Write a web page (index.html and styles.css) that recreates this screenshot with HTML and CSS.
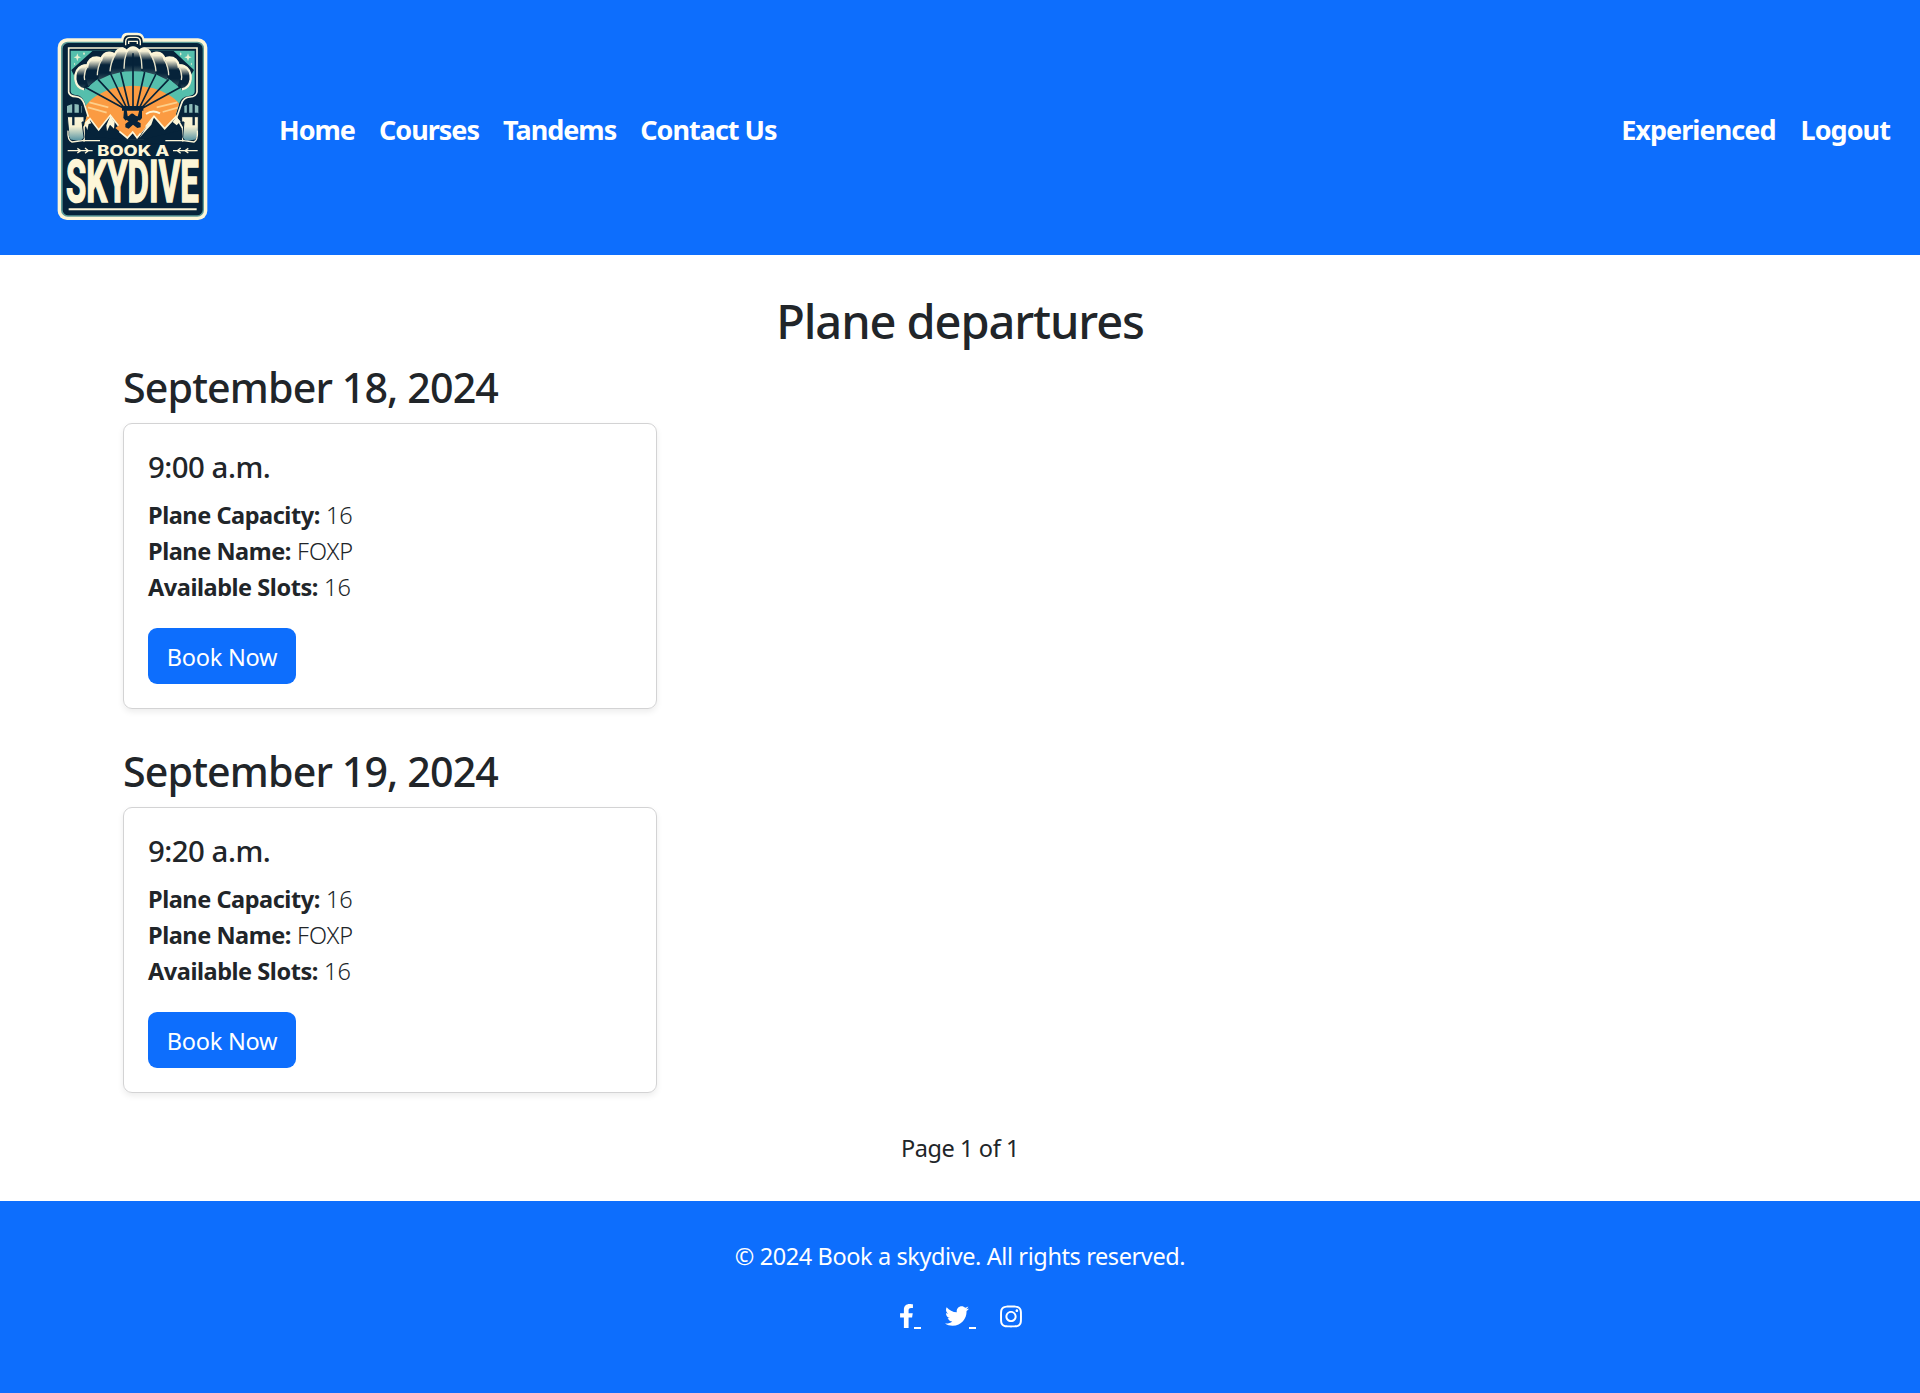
FILE: index.html
```html
<!DOCTYPE html>
<html lang="en">
<head>
<meta charset="utf-8">
<title>Book a skydive</title>
<link rel="stylesheet" href="styles.css">
</head>
<body>
<header class="navbar">
  <a class="brand" href="#" aria-label="Book a skydive">
    <svg class="logo" viewBox="0 0 570 645">
      <defs>
        <linearGradient id="canopy" x1="0" y1="0" x2="0" y2="1">
          <stop offset="0" stop-color="#fdf6d8"/><stop offset=".12" stop-color="#f2edd2"/><stop offset=".45" stop-color="#06233a"/><stop offset=".75" stop-color="#06233a"/><stop offset="1" stop-color="#33505c"/>
        </linearGradient>
        <linearGradient id="post" x1="0" y1="0" x2="0" y2="1">
          <stop offset="0" stop-color="#fdf6d8"/><stop offset=".4" stop-color="#f4f0d2"/><stop offset="1" stop-color="#4e8fa0"/>
        </linearGradient>
        <clipPath id="scene"><path d="M92 92H464V216Q462 226 446 228Q424 230 418 250L408 282L440 358H120L142 282Q136 230 112 226Q92 224 92 214Z"/></clipPath>
      </defs>
      <path d="M244 62V54Q246 38 264 38H292Q312 38 314 62" fill="#fdf6d8"/>
      <rect x="53" y="55" width="449" height="545" rx="28" fill="#fdf6d8"/>
      <rect x="63" y="65" width="429" height="525" rx="20" fill="#5d9b98"/>
      <rect x="68" y="69" width="420" height="517" rx="17" fill="#06233a"/>
      <path d="M250 76V62Q252 46 266 46H290Q306 46 308 62V76" fill="#06233a"/>
      <path d="M257 76V64Q258 52 270 52H288Q300 52 301 64V76M266 72V64H292V72" fill="none" stroke="#fdf6d8" stroke-width="4"/>
      <path d="M92 92H464V216Q462 226 446 228Q424 230 418 250L408 282L440 358H120L142 282Q136 230 112 226Q92 224 92 214Z" fill="#55bfac"/>
      <g clip-path="url(#scene)">
        <path d="M158 92H400L462 150L430 204L120 202L94 150Z" fill="#06233a"/>
        <path d="M142 206Q180 154 280 153Q380 154 420 206L400 260H160Z" fill="#55bfac"/>
        <ellipse cx="280" cy="302" rx="158" ry="105" fill="#fb9b42"/>
        <path d="M148 247L205 262M144 262L200 278M412 247L350 262M416 262L368 276" stroke="#fdcf8b" stroke-width="5"/>
        <path d="M318 282Q338 268 360 280" fill="none" stroke="#fdf6d8" stroke-width="6"/>
      </g>
      <path d="M86 92V84H250M310 84H471V216Q469 230 450 231Q430 232 424 252L411 290M86 84V216Q88 229 108 230Q126 232 132 250L145 290" fill="none" stroke="#fdf6d8" stroke-width="5"/>
      <path d="M112 100L115 109L123 112L115 115L112 124L109 115L101 112L109 109ZM444 100L447 109L455 112L447 115L444 124L441 115L433 112L441 109ZM132 96l3 5-3 5-3-5ZM422 97l3 5-3 5-3-5ZM104 128l2 4-2 4-2-4ZM454 128l2 4-2 4-2-4Z" fill="#e6f0d2"/>
      <path d="M132 322L150 296L176 330L211 286L262 352L280 334L292 352L342 289L374 326L408 290L428 325V362H132Z" fill="#06233a" stroke="#fdf6d8" stroke-width="5"/>
      <path d="M211 288L199 316L201 334L210 314L222 326L224 306ZM342 291L326 310L298 354L334 314ZM146 296L134 308L142 330L146 312L154 310ZM408 292L398 306L410 316L422 304Z" fill="#fdf6d8"/>
      <path d="M135 328L168 352L262 358L310 358L426 330V370H135Z" fill="#06233a"/>
      <path d="M226 324L262 354L280 336L292 354L318 320L296 306H250Z" fill="#fb9b42"/>
      <path d="M238 334L262 354L278 336L291 353L302 340" fill="none" stroke="#fdf6d8" stroke-width="5"/>
      <g fill="url(#canopy)">
        <path d="M104 180Q102 145 130 134Q150 128 158 145Q140 165 134 210Q110 206 104 180Z"/>
        <path d="M454 180Q456 145 430 134Q408 128 400 145Q420 165 424 210Q448 206 454 180Z"/>
        <path d="M140 140Q144 108 174 112Q192 114 194 128Q172 150 164 184L145 198Q132 164 140 140Z"/>
        <path d="M418 140Q414 108 384 112Q366 114 364 128Q386 150 396 184L413 198Q426 164 418 140Z"/>
        <path d="M180 128Q182 96 212 97Q230 99 232 112Q212 140 210 164L176 180Q174 148 180 128Z"/>
        <path d="M378 128Q376 96 346 97Q328 99 326 112Q346 140 350 164L382 180Q384 148 378 128Z"/>
        <path d="M222 116Q226 82 252 85Q266 88 264 108Q254 130 252 154L214 164Q212 138 222 116Z"/>
        <path d="M336 116Q332 82 306 85Q292 88 294 108Q304 130 308 154L346 164Q348 138 336 116Z"/>
        <path d="M256 108Q258 82 279 80Q300 82 302 108Q306 132 304 154H252Q252 130 256 108Z"/>
      </g>
      <path d="M132 208Q110 204 106 178Q104 148 126 138Q136 134 142 138Q146 112 170 112Q178 112 184 118Q190 96 210 98Q218 99 224 104Q232 84 250 86Q256 88 260 94Q268 82 279 82Q290 82 298 94Q302 88 308 86Q326 84 334 104Q340 99 348 98Q368 96 374 118Q380 112 388 112Q412 112 416 138Q422 134 432 138Q454 148 452 178Q448 204 426 208" fill="none" stroke="#fdf6d8" stroke-width="7"/>
      <path d="M142 140Q130 160 134 180M184 120Q172 144 172 166M224 106Q212 128 210 154M260 96Q252 118 252 146M298 96Q306 118 306 146M334 106Q346 128 348 154M374 120Q386 144 386 166M416 140Q428 160 424 180" fill="none" stroke="#e8e4cb" stroke-width="4"/>
      <path d="M133 200L250 264M174 178L254 264M212 162L260 264M242 156L268 264M279 100V264M314 156L290 264M348 162L298 264M386 178L304 264M424 200L308 264" fill="none" stroke="#06233a" stroke-width="5"/>
      <path d="M246 258H310V272H246ZM252 270H260L264 294L257 302L250 294ZM298 270H306V294L299 302L292 294ZM256 286Q264 292 270 284Q278 276 284 285Q292 292 300 286L302 296L292 304L302 310V322L292 324L279 314L266 326L256 322V312L266 304L256 298Z" fill="#06233a"/>
      <path d="M81 258Q104 246 125 258V280H81ZM433 258Q454 246 475 258V280H433Z" fill="#8dbcb9"/>
      <path d="M82 290H132V306H126L132 352Q130 362 116 364L91 360Q83 350 86 336ZM425 290H475V336Q476 350 466 360L442 364Q430 362 428 352L432 306H425Z" fill="url(#post)" stroke="#06233a" stroke-width="3"/>
      <path d="M84 332Q82 362 96 366L128 362H180M472 332Q474 362 462 366L430 362H376" fill="none" stroke="#fdf6d8" stroke-width="4"/>
      <path d="M100 236V316M120 244V286M82 282H130M444 244V286M461 236V316M430 282H474" stroke="#06233a" stroke-width="7"/>
      <path d="M83 392H158M399 392H473M112 385L122 392L112 399M135 384L145 392L135 400M445 385L435 392L445 399M422 384L412 392L422 400" fill="none" stroke="#fdf6d8" stroke-width="4"/>
      <text class="logo-small" x="172" y="407" textLength="216" lengthAdjust="spacingAndGlyphs">BOOK A</text>
      <text class="logo-big" x="78" y="546" textLength="398" lengthAdjust="spacingAndGlyphs">SKYDIVE</text>
      <path d="M86 568H470" stroke="#fdf6d8" stroke-width="6"/>
    </svg>
  </a>
  <nav class="menu">
    <a href="#">Home</a><a href="#">Courses</a><a href="#">Tandems</a><a href="#">Contact Us</a>
  </nav>
  <nav class="menu menu-end">
    <a href="#">Experienced</a><a href="#">Logout</a>
  </nav>
</header>

<main class="container">
  <h1>Plane departures</h1>
  <section class="day">
    <h2>September 18, 2024</h2>
    <article class="card">
      <h5>9:00 a.m.</h5>
      <p><strong>Plane Capacity:</strong> 16<br><strong>Plane Name:</strong> FOXP<br><strong>Available Slots:</strong> 16</p>
      <a class="btn" href="#">Book Now</a>
    </article>
  </section>
  <section class="day">
    <h2>September 19, 2024</h2>
    <article class="card">
      <h5>9:20 a.m.</h5>
      <p><strong>Plane Capacity:</strong> 16<br><strong>Plane Name:</strong> FOXP<br><strong>Available Slots:</strong> 16</p>
      <a class="btn" href="#">Book Now</a>
    </article>
  </section>
  <div class="pagination">Page 1 of 1</div>
</main>

<footer class="footer">
  <p>© 2024 Book a skydive. All rights reserved.</p>
  <div class="social">
    <a class="facebook" href="#" aria-label="Facebook"><svg viewBox="0 0 320 512"><path d="M279.14 288l14.22-92.66h-88.91v-60.13c0-25.35 12.42-50.06 52.24-50.06h40.42V6.26S260.43 0 225.36 0c-73.22 0-121.08 44.38-121.08 124.72v70.62H22.89V288h81.39v224h100.17V288z"/></svg><i></i></a>
    <a class="twitter" href="#" aria-label="Twitter"><svg viewBox="0 0 512 512"><path d="M459.37 151.716c.325 4.548.325 9.097.325 13.645 0 138.72-105.583 298.558-298.558 298.558-59.452 0-114.68-17.219-161.137-47.106 8.447.974 16.568 1.299 25.34 1.299 49.055 0 94.213-16.568 130.274-44.832-46.132-.975-84.792-31.188-98.112-72.772 6.498.974 12.995 1.624 19.818 1.624 9.421 0 18.843-1.3 27.614-3.573-48.081-9.747-84.143-51.98-84.143-102.985v-1.299c13.969 7.797 30.214 12.67 47.431 13.319-28.264-18.843-46.781-51.005-46.781-87.391 0-19.492 5.197-37.36 14.294-52.954 51.655 63.675 129.3 105.258 216.365 109.807-1.624-7.797-2.599-15.918-2.599-24.04 0-57.828 46.782-104.934 104.934-104.934 30.213 0 57.502 12.67 76.67 33.137 23.715-4.548 46.456-13.32 66.599-25.34-7.798 24.366-24.366 44.833-46.132 57.827 21.117-2.273 41.584-8.122 60.426-16.243-14.292 20.791-32.161 39.308-52.628 54.253z"/></svg><i></i></a>
    <a class="instagram" href="#" aria-label="Instagram"><svg viewBox="0 0 448 512"><path d="M224.1 141c-63.6 0-114.9 51.3-114.9 114.9s51.3 114.9 114.9 114.9S339 319.5 339 255.9 287.7 141 224.1 141zm0 189.6c-41.1 0-74.7-33.5-74.7-74.7s33.5-74.7 74.7-74.7 74.7 33.5 74.7 74.7-33.6 74.7-74.7 74.7zm146.4-194.3c0 14.9-12 26.8-26.8 26.8-14.9 0-26.8-12-26.8-26.8s12-26.8 26.8-26.8 26.8 12 26.8 26.8zm76.1 27.2c-1.7-35.9-9.9-67.7-36.2-93.9-26.2-26.2-58-34.4-93.9-36.2-37-2.1-147.9-2.1-184.9 0-35.8 1.7-67.6 9.9-93.9 36.1s-34.4 58-36.2 93.9c-2.1 37-2.1 147.9 0 184.9 1.7 35.9 9.9 67.7 36.2 93.9s58 34.4 93.9 36.2c37 2.1 147.9 2.1 184.9 0 35.9-1.7 67.7-9.9 93.9-36.2 26.2-26.2 34.4-58 36.2-93.9 2.1-37 2.1-147.8 0-184.8zM398.8 388c-7.8 19.6-22.9 34.7-42.6 42.6-29.5 11.7-99.5 9-132.1 9s-102.7 2.6-132.1-9c-19.6-7.8-34.7-22.9-42.6-42.6-11.7-29.5-9-99.5-9-132.1s-2.6-102.7 9-132.1c7.8-19.6 22.9-34.7 42.6-42.6 29.5-11.7 99.5-9 132.1-9s102.7-2.6 132.1 9c19.6 7.8 34.7 22.9 42.6 42.6 11.7 29.5 9 99.5 9 132.1s2.7 102.7-9 132.1z"/></svg></a>
  </div>
</footer>
</body>
</html>
```
FILE: styles.css
```css
* { box-sizing: border-box; }
body {
  margin: 0;
  font: 400 23.5px/36px "Noto Sans", "Open Sans", sans-serif;
  color: #212529;
  background: #fff;
}
a { color: inherit; text-decoration: none; }
h1, h2, h5, p { margin: 0; }

.navbar {
  display: flex;
  align-items: center;
  height: 255px;
  padding: 0 30px 0 40px;
  background: #0d6efd;
  color: #fff;
}
.brand { display: block; width: 190px; height: 215px; }
.logo { display: block; width: 190px; height: 215px; overflow: visible; }
.logo-small, .logo-big { fill: #fdf6d8; font-weight: 700; }
.logo-small { font-family: Inter, sans-serif; font-size: 42px; font-weight: 800; }
.logo-big { font-family: Roboto, sans-serif; font-size: 176px; stroke: #fdf6d8; stroke-width: 5px; }

.menu {
  display: flex;
  gap: 24px;
  padding-top: 4px;
  margin-left: 49px;
  font-size: 27px;
  font-weight: 700;
  letter-spacing: -1px;
}
.menu-end { margin-left: auto; gap: 25px; letter-spacing: -0.95px; }

.container { width: 1674px; margin: 0 auto; padding: 37.5px 0 35px; }
h1 {
  margin-bottom: 12px;
  font-size: 47px;
  line-height: 57.6px;
  font-weight: 500;
  letter-spacing: -1.1px;
  text-align: center;
}
.day { margin-bottom: 37px; }
h2 {
  margin-bottom: 10.6px;
  font-size: 41.2px;
  line-height: 50.4px;
  font-weight: 500;
  letter-spacing: -0.88px;
}
.card {
  width: 534px;
  padding: 25px 24px 24px;
  border: 1px solid #d3d3d4;
  border-radius: 9px;
  box-shadow: 0 3px 6px rgba(0, 0, 0, .075);
}
h5 {
  margin-bottom: 12px;
  font-size: 29.4px;
  line-height: 36px;
  font-weight: 500;
  letter-spacing: -0.5px;
}
.card p { margin-bottom: 23px; font-weight: 330; }
.card strong { font-weight: 700; letter-spacing: -0.45px; }
.btn {
  display: block;
  width: 148px;
  height: 56px;
  border-radius: 9px;
  background: #0d6efd;
  color: #fff;
  line-height: 58px;
  letter-spacing: -0.25px;
  text-align: center;
}
.pagination { text-align: center; letter-spacing: -0.4px; }

.footer {
  height: 192px;
  padding-top: 37px;
  background: #0d6efd;
  color: #fff;
  text-align: center;
}
.footer p { margin-bottom: 24px; letter-spacing: -0.4px; }
.social { display: flex; justify-content: center; gap: 24px; height: 36px; padding-top: 6px; }
.social a { display: flex; align-items: flex-start; }
.social svg { display: block; height: 24px; fill: currentColor; }
.social i { width: 7px; height: 2px; margin-top: 23px; background: currentColor; }
.facebook svg { width: 15px; }
.twitter svg { width: 24px; }
.instagram svg { width: 22px; height: 25px; }
```
